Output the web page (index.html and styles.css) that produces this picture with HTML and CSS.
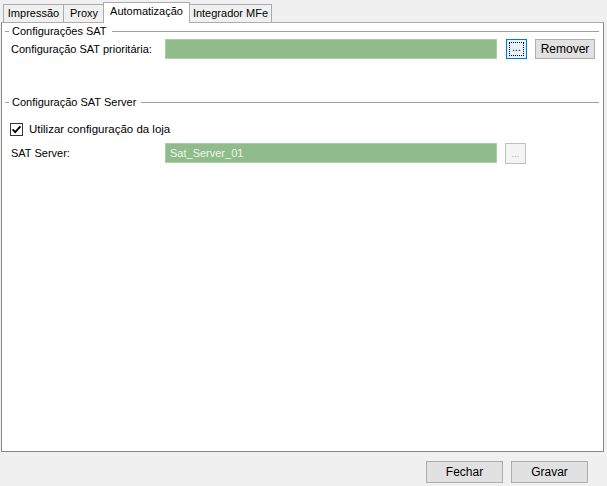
FILE: index.html
```html
<!DOCTYPE html>
<html>
<head>
<meta charset="utf-8">
<link rel="stylesheet" href="styles.css">
</head>
<body>
<div class="window">
  <div class="tabs">
    <div class="tab t-imp">Impressão</div>
    <div class="tab t-proxy">Proxy</div>
    <div class="tab active t-auto">Automatização</div>
    <div class="tab t-int">Integrador MFe</div>
  </div>
  <div class="panel">
    <div class="group-head g1">
      <span class="dash"></span>
      <span class="gtitle">Configurações SAT</span>
      <span class="line"></span>
    </div>
    <div class="row r1">
      <span class="label">Configuração SAT prioritária:</span>
      <div class="field"></div>
      <button class="btn dots focused"><span class="focusbox">...</span></button>
      <button class="btn remover">Remover</button>
    </div>

    <div class="group-head g2">
      <span class="dash"></span>
      <span class="gtitle">Configuração SAT Server</span>
      <span class="line"></span>
    </div>
    <div class="check-row">
      <span class="checkbox">
        <svg width="13" height="13" viewBox="0 0 13 13"><rect x="0.5" y="0.5" width="12" height="12" fill="#fff" stroke="#333"/><path d="M2.6 6.4 L5.2 9.2 L10.4 3.4" fill="none" stroke="#000" stroke-width="1.9"/></svg>
      </span>
      <span class="clabel">Utilizar configuração da loja</span>
    </div>
    <div class="row r2">
      <span class="label">SAT Server:</span>
      <div class="field">Sat_Server_01</div>
      <button class="btn dots disabled">...</button>
    </div>
  </div>
  <div class="footer">
    <button class="btn big">Fechar</button>
    <button class="btn big">Gravar</button>
  </div>
</div>
</body>
</html>
```
FILE: styles.css
```css
* { box-sizing: border-box; }
html, body { margin: 0; padding: 0; }
body {
  width: 607px;
  height: 486px;
  background: #f0f0f0;
  font-family: "Liberation Sans", Arial, sans-serif;
  font-size: 11px;
  color: #000;
  overflow: hidden;
}
.window { width: 607px; height: 486px; }
.tabs {
  display: flex;
  align-items: flex-end;
  height: 22px;
  padding-left: 3px;
}
.tab {
  height: 18px;
  line-height: 16px;
  padding: 0;
  text-align: center;
  white-space: nowrap;
  border: 1px solid #acacac;
  border-bottom: none;
  background: #f0f0f0;
  margin-right: -1px;
  position: relative;
}
.t-imp { width: 61px; }
.t-proxy { width: 42px; }
.t-auto { width: 87px; }
.t-int { width: 83px; }
.tab.active {
  height: 21px;
  line-height: 17px;
  background: #fff;
  margin: 0 -1px 0 -1px;
  z-index: 2;
  top: 1px;
}
.panel {
  margin-left: 1px;
  width: 603px;
  height: 430px;
  background: #fff;
  border: 1px solid #898989;
  border-top-color: #acacac;
  padding: 2px 4px 0 2px;
}
.group-head {
  display: flex;
  align-items: center;
  height: 14px;
}
.group-head .dash {
  width: 4px;
  height: 1px;
  background: #a0a0a0;
  margin-left: 1px;
  margin-right: 1px;
}
.group-head .gtitle { padding: 0 2px; white-space: nowrap; }
.group-head .line {
  flex: 1;
  height: 1px;
  background: #a0a0a0;
  margin-left: 3px;
}
.g1 { margin-top: -1px; }
.g2 { margin-top: 36px; }
.row {
  display: flex;
  align-items: center;
  height: 20px;
}
.r1 { margin-top: 1px; }
.row .label {
  width: 161px;
  padding-left: 7px;
}
.field {
  width: 332px;
  height: 20px;
  background: #8fbc8a;
  border: 1px solid #a9cfa5;
  color: #eef5ee;
  padding-left: 4px;
  line-height: 18px;
}
.btn {
  font-family: "Liberation Sans", Arial, sans-serif;
  font-size: 11px;
  color: #000;
  background: #e1e1e1;
  border: 1px solid #adadad;
  padding: 0;
  margin: 0;
}
.dots {
  width: 21px;
  height: 20px;
  margin-left: 9px;
  display: flex;
  align-items: center;
  justify-content: center;
}
.dots.focused {
  border-color: #0078d7;
  background: #e5f1fb;
}
.focusbox {
  display: block;
  width: 15px;
  height: 14px;
  border: 1px dotted #000;
  line-height: 10px;
  font-size: 10px;
}
.dots.disabled {
  background: #f4f4f4;
  border-color: #bfbfbf;
  color: #a0a0a0;
  margin-left: 8px;
  height: 21px;
  align-items: flex-end;
  padding-bottom: 4px;
  font-size: 9px;
}
.remover {
  width: 60px;
  height: 20px;
  margin-left: 8px;
  font-size: 12px;
}
.check-row {
  display: flex;
  align-items: center;
  height: 16px;
  margin-top: 12px;
  padding-left: 6px;
}
.checkbox { display: flex; width: 13px; height: 13px; }
.clabel { margin-left: 6px; font-size: 11.5px; }
.r2 { margin-top: 6px; }
.footer {
  display: flex;
  justify-content: flex-end;
  gap: 8px;
  padding: 9px 19px 0 0;
}
.btn.big {
  width: 77px;
  height: 22px;
  font-size: 12px;
}
```
